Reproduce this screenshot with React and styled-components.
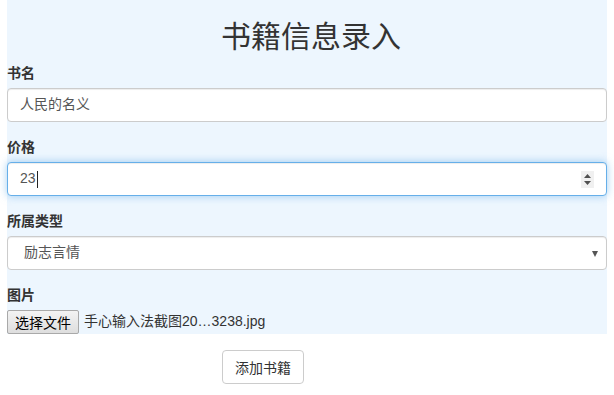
import React from 'react';
import styled, { createGlobalStyle } from 'styled-components';

const GlobalStyle = createGlobalStyle`
  * { box-sizing: border-box; }
  body {
    margin: 0;
    background: #fff;
    color: #333;
    font-family: "Helvetica Neue", "Liberation Sans", "Noto Sans CJK SC", sans-serif;
    font-size: 14px;
    line-height: 1.42857;
  }
`;

const Page = styled.div`
  padding: 0 7px;
`;

const Panel = styled.form`
  background: #edf6fe;
  padding-top: 20px;
`;

const Title = styled.h1`
  margin: 0 0 10px;
  font-size: 30px;
  line-height: 33px;
  font-weight: 400;
  text-align: center;
  color: #333;
  padding-left: 8px;
`;

const Group = styled.div`
  margin-bottom: ${(p) => (p.last ? 0 : 15)}px;
`;

const Label = styled.label`
  display: block;
  margin-bottom: 5px;
  font-weight: 700;
  font-size: 14px;
  line-height: 20px;
  color: #333;
`;

const Field = styled.div`
  position: relative;
  display: flex;
  align-items: center;
  height: 34px;
  padding: 6px 12px;
  background: #fff;
  border: 1px solid ${(p) => (p.focused ? '#66afe9' : '#ccc')};
  border-radius: 4px;
  box-shadow: ${(p) =>
    p.focused
      ? 'inset 0 1px 1px rgba(0,0,0,.075), 0 0 8px rgba(102,175,233,.6)'
      : 'inset 0 1px 1px rgba(0,0,0,.075)'};
  color: #555;
  font-size: 14px;
`;

const Value = styled.span`
  padding-left: ${(p) => p.indent || 0}px;
`;

const Caret = styled.span`
  display: inline-block;
  width: 1px;
  height: 17px;
  background: #222;
  margin-left: 1px;
`;

const Spinner = styled.span`
  margin-left: auto;
  display: flex;
  align-items: center;
  justify-content: center;
  width: 13px;
  height: 17px;
  background: #f0f0f0;
`;

const Arrow = styled.span`
  position: absolute;
  right: 8px;
  top: 14px;
  display: flex;
`;

const FileRow = styled.div`
  display: flex;
  align-items: center;
  gap: 5px;
  height: 24px;
`;

const FileButton = styled.button`
  height: 24px;
  padding: 0 7px;
  font-family: inherit;
  font-size: 14px;
  color: #000;
  background: linear-gradient(#f3f3f3, #dedede);
  border: 1px solid #a9a9a9;
  border-radius: 2px;
`;

const FileName = styled.span`
  font-size: 14px;
  color: #333;
`;

const Actions = styled.div`
  padding: 16px 0 0 215px;
`;

const Submit = styled.button`
  height: 34px;
  padding: 6px 12px;
  font-family: inherit;
  font-size: 14px;
  color: #333;
  background: #fff;
  border: 1px solid #ccc;
  border-radius: 4px;
`;

export default function App() {
  return (
    <Page>
      <GlobalStyle />
      <Panel>
        <Title>书籍信息录入</Title>
        <Group>
          <Label>书名</Label>
          <Field>
            <Value>人民的名义</Value>
          </Field>
        </Group>
        <Group>
          <Label>价格</Label>
          <Field focused>
            <Value>23</Value>
            <Caret />
            <Spinner>
              <svg width="9" height="13" viewBox="0 0 9 13">
                <path d="M4.5 1 L8 5 L1 5 Z" fill="#505050" />
                <path d="M1 8 L8 8 L4.5 12 Z" fill="#505050" />
              </svg>
            </Spinner>
          </Field>
        </Group>
        <Group>
          <Label>所属类型</Label>
          <Field>
            <Value indent={4}>励志言情</Value>
            <Arrow>
              <svg width="6" height="6" viewBox="0 0 6 6">
                <path d="M0 0 L6 0 L3 6 Z" fill="#555" />
              </svg>
            </Arrow>
          </Field>
        </Group>
        <Group last>
          <Label>图片</Label>
          <FileRow>
            <FileButton type="button">选择文件</FileButton>
            <FileName>手心输入法截图20…3238.jpg</FileName>
          </FileRow>
        </Group>
      </Panel>
      <Actions>
        <Submit type="button">添加书籍</Submit>
      </Actions>
    </Page>
  );
}
